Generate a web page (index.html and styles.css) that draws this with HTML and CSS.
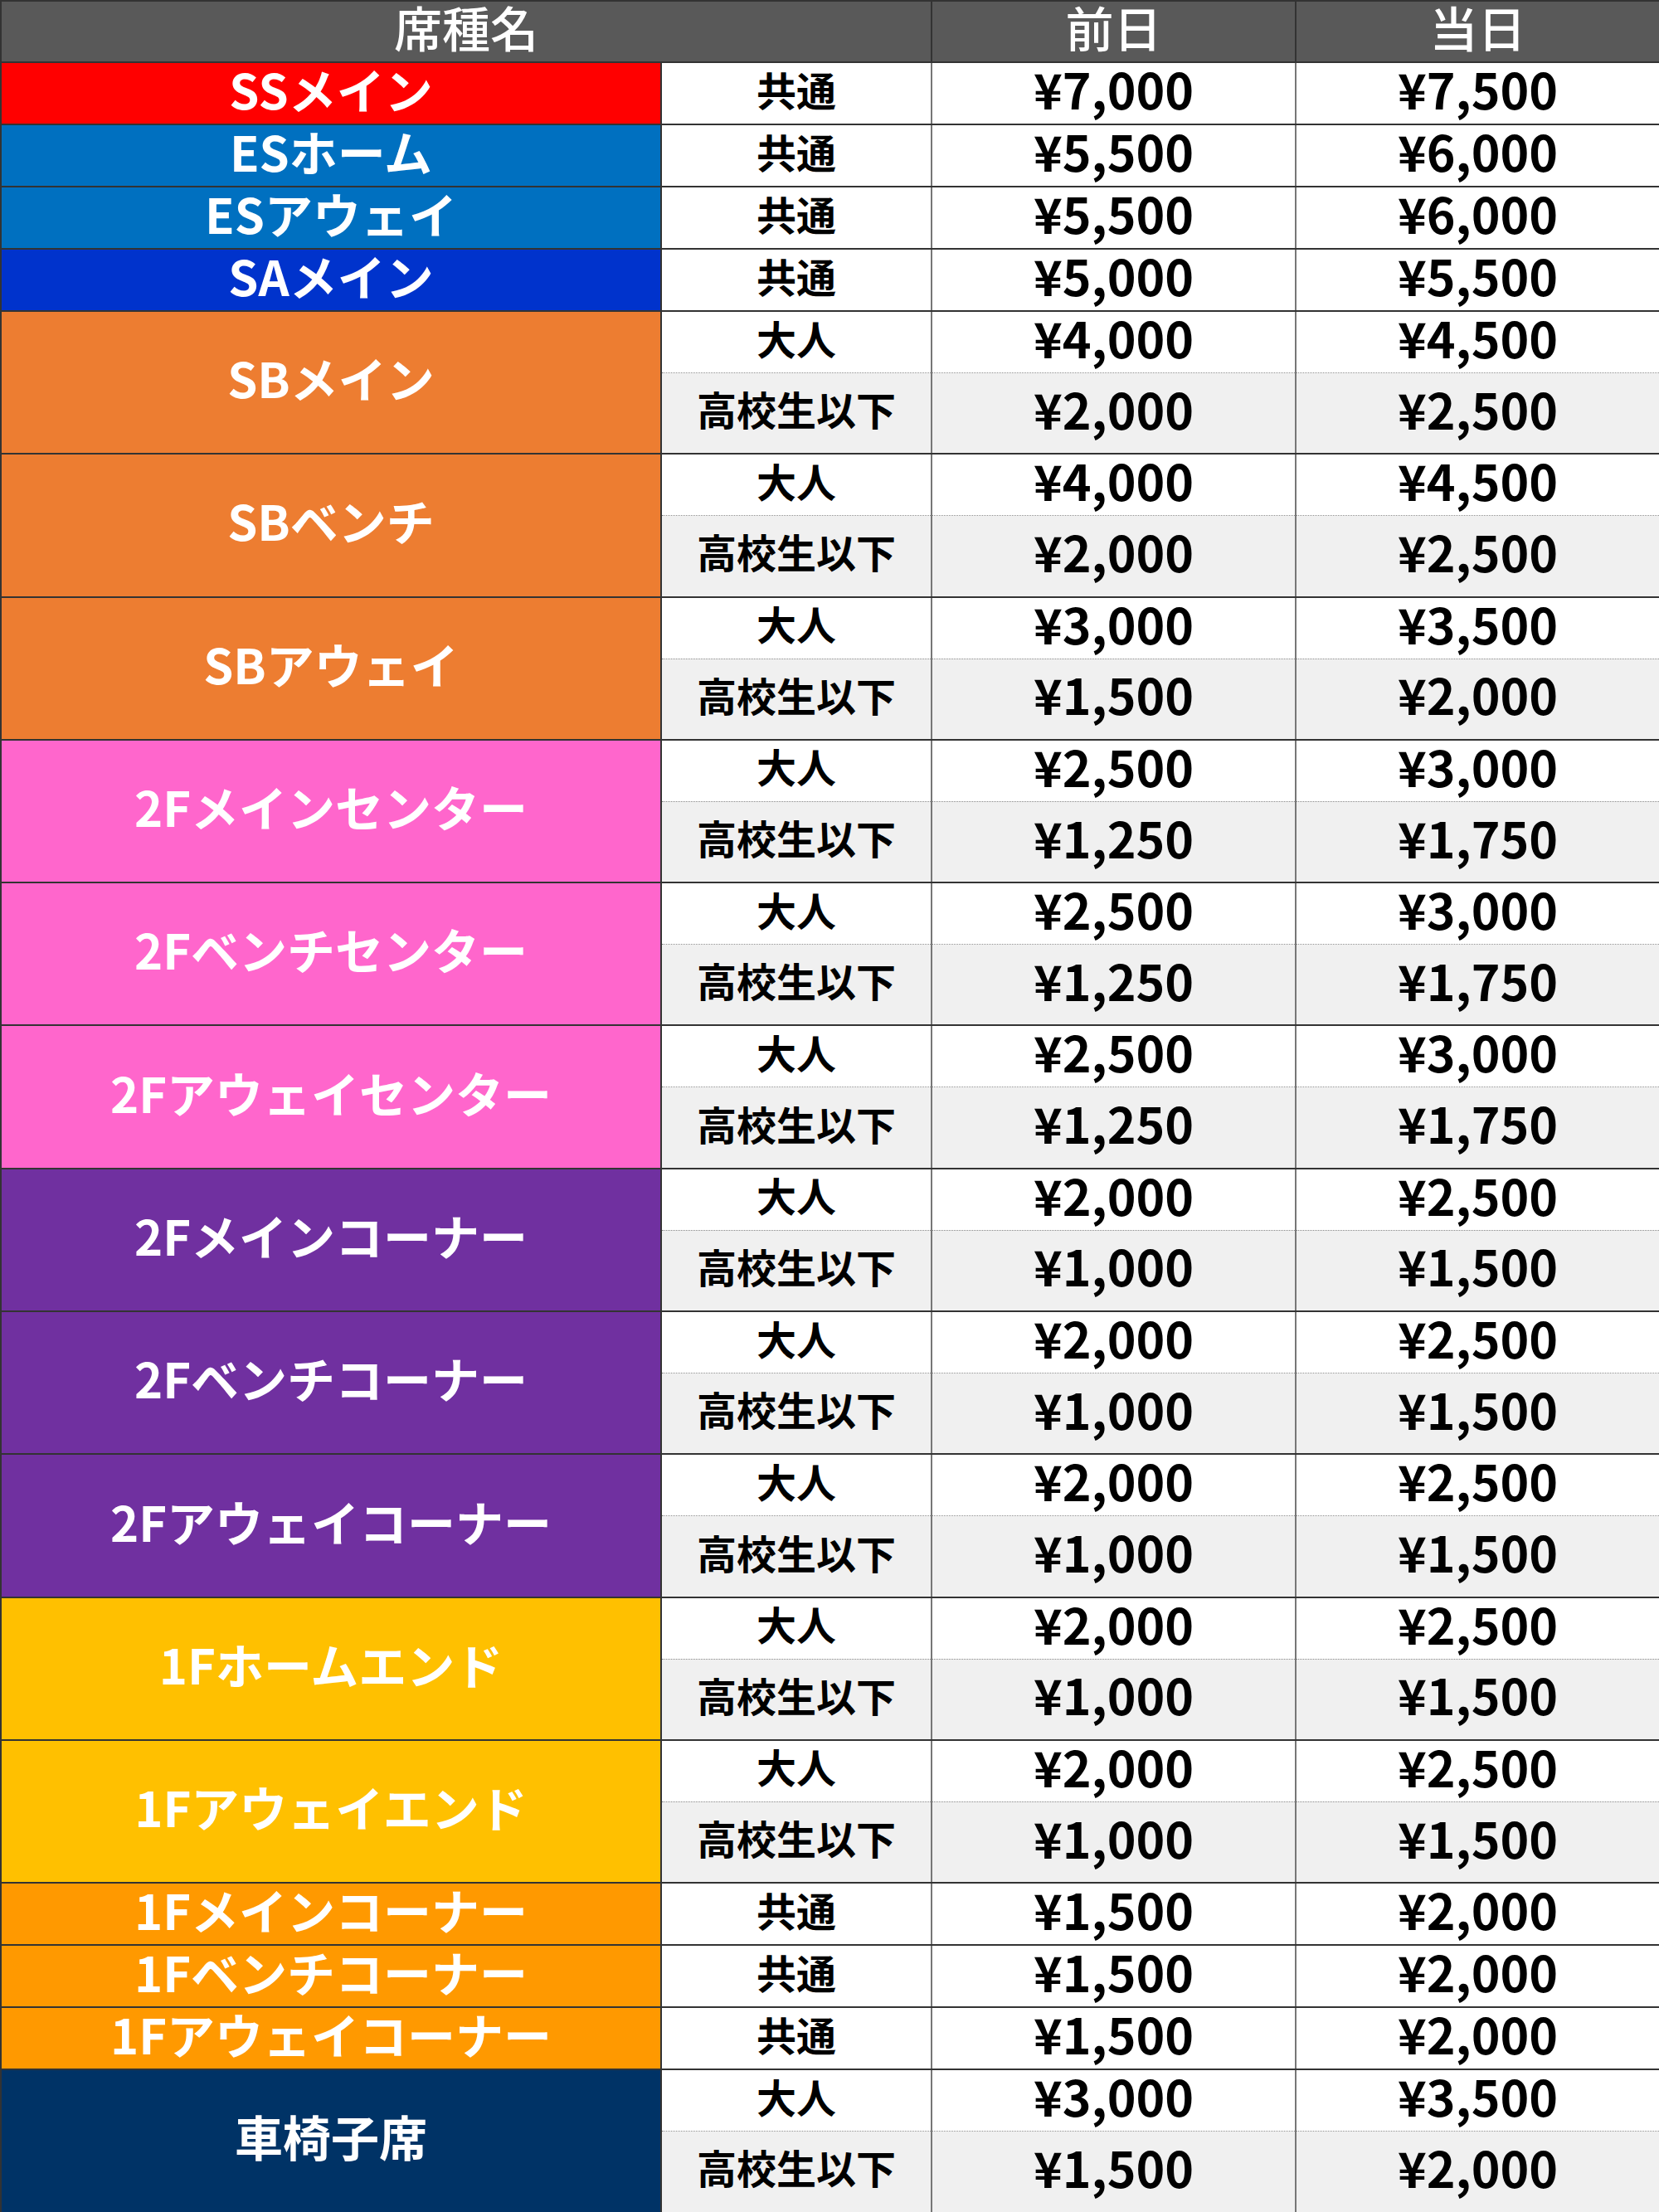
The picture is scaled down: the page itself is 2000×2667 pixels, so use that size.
FILE: index.html
```html
<!DOCTYPE html>
<html lang="ja">
<head>
<meta charset="utf-8">
<title>席種別料金</title>
<link rel="stylesheet" href="styles.css">
</head>
<body>
<table class="price">
  <colgroup>
    <col class="c-name"><col class="c-type"><col class="c-price"><col class="c-price">
  </colgroup>
  <thead>
    <tr class="head"><th colspan="2">席種名</th><th>前日</th><th>当日</th></tr>
  </thead>
  <tbody>
    <tr class="single"><td class="seat ss">SSメイン</td><td class="type">共通</td><td class="amt">¥7,000</td><td class="amt">¥7,500</td></tr>
    <tr class="single"><td class="seat es">ESホーム</td><td class="type">共通</td><td class="amt">¥5,500</td><td class="amt">¥6,000</td></tr>
    <tr class="single"><td class="seat es">ESアウェイ</td><td class="type">共通</td><td class="amt">¥5,500</td><td class="amt">¥6,000</td></tr>
    <tr class="single"><td class="seat sa">SAメイン</td><td class="type">共通</td><td class="amt">¥5,000</td><td class="amt">¥5,500</td></tr>

    <tr class="adult"><td class="seat sb" rowspan="2">SBメイン</td><td class="type">大人</td><td class="amt">¥4,000</td><td class="amt">¥4,500</td></tr>
    <tr class="kid"><td class="type">高校生以下</td><td class="amt">¥2,000</td><td class="amt">¥2,500</td></tr>
    <tr class="adult"><td class="seat sb" rowspan="2">SBベンチ</td><td class="type">大人</td><td class="amt">¥4,000</td><td class="amt">¥4,500</td></tr>
    <tr class="kid"><td class="type">高校生以下</td><td class="amt">¥2,000</td><td class="amt">¥2,500</td></tr>
    <tr class="adult"><td class="seat sb" rowspan="2">SBアウェイ</td><td class="type">大人</td><td class="amt">¥3,000</td><td class="amt">¥3,500</td></tr>
    <tr class="kid"><td class="type">高校生以下</td><td class="amt">¥1,500</td><td class="amt">¥2,000</td></tr>

    <tr class="adult"><td class="seat pk" rowspan="2">2Fメインセンター</td><td class="type">大人</td><td class="amt">¥2,500</td><td class="amt">¥3,000</td></tr>
    <tr class="kid"><td class="type">高校生以下</td><td class="amt">¥1,250</td><td class="amt">¥1,750</td></tr>
    <tr class="adult"><td class="seat pk" rowspan="2">2Fベンチセンター</td><td class="type">大人</td><td class="amt">¥2,500</td><td class="amt">¥3,000</td></tr>
    <tr class="kid"><td class="type">高校生以下</td><td class="amt">¥1,250</td><td class="amt">¥1,750</td></tr>
    <tr class="adult"><td class="seat pk" rowspan="2">2Fアウェイセンター</td><td class="type">大人</td><td class="amt">¥2,500</td><td class="amt">¥3,000</td></tr>
    <tr class="kid"><td class="type">高校生以下</td><td class="amt">¥1,250</td><td class="amt">¥1,750</td></tr>

    <tr class="adult"><td class="seat pu" rowspan="2">2Fメインコーナー</td><td class="type">大人</td><td class="amt">¥2,000</td><td class="amt">¥2,500</td></tr>
    <tr class="kid"><td class="type">高校生以下</td><td class="amt">¥1,000</td><td class="amt">¥1,500</td></tr>
    <tr class="adult"><td class="seat pu" rowspan="2">2Fベンチコーナー</td><td class="type">大人</td><td class="amt">¥2,000</td><td class="amt">¥2,500</td></tr>
    <tr class="kid"><td class="type">高校生以下</td><td class="amt">¥1,000</td><td class="amt">¥1,500</td></tr>
    <tr class="adult"><td class="seat pu" rowspan="2">2Fアウェイコーナー</td><td class="type">大人</td><td class="amt">¥2,000</td><td class="amt">¥2,500</td></tr>
    <tr class="kid"><td class="type">高校生以下</td><td class="amt">¥1,000</td><td class="amt">¥1,500</td></tr>

    <tr class="adult"><td class="seat ye" rowspan="2">1Fホームエンド</td><td class="type">大人</td><td class="amt">¥2,000</td><td class="amt">¥2,500</td></tr>
    <tr class="kid"><td class="type">高校生以下</td><td class="amt">¥1,000</td><td class="amt">¥1,500</td></tr>
    <tr class="adult"><td class="seat ye" rowspan="2">1Fアウェイエンド</td><td class="type">大人</td><td class="amt">¥2,000</td><td class="amt">¥2,500</td></tr>
    <tr class="kid"><td class="type">高校生以下</td><td class="amt">¥1,000</td><td class="amt">¥1,500</td></tr>

    <tr class="single"><td class="seat or">1Fメインコーナー</td><td class="type">共通</td><td class="amt">¥1,500</td><td class="amt">¥2,000</td></tr>
    <tr class="single"><td class="seat or">1Fベンチコーナー</td><td class="type">共通</td><td class="amt">¥1,500</td><td class="amt">¥2,000</td></tr>
    <tr class="single"><td class="seat or">1Fアウェイコーナー</td><td class="type">共通</td><td class="amt">¥1,500</td><td class="amt">¥2,000</td></tr>

    <tr class="adult"><td class="seat nv" rowspan="2">車椅子席</td><td class="type">大人</td><td class="amt">¥3,000</td><td class="amt">¥3,500</td></tr>
    <tr class="kid"><td class="type">高校生以下</td><td class="amt">¥1,500</td><td class="amt">¥2,000</td></tr>
  </tbody>
</table>
</body>
</html>
```
FILE: styles.css
```css
html, body {
  margin: 0;
  padding: 0;
  background: #ffffff;
}

.price {
  width: 2000px;
  border-collapse: collapse;
  table-layout: fixed;
  font-family: "Noto Sans CJK JP", "Noto Sans", sans-serif;
  font-weight: 700;
}

.c-name { width: 796px; }
.c-type { width: 326px; }
.c-price { width: 439px; }

.price th,
.price td {
  padding: 0 0 12px 0;
  text-align: center;
  vertical-align: middle;
  line-height: 1;
  border: 2px solid #333333;
}

.head th {
  height: 60px;
  background: #595959;
  color: #ffffff;
  font-size: 58px;
  font-weight: 500;
}

.single td { height: 61px; }
.adult td { height: 61px; }
.kid td { height: 84.3px; }

.type {
  font-size: 48px;
  color: #000000;
}

.amt {
  font-size: 59px;
  color: #000000;
}

.price td.type,
.price td.amt {
  border-left: 2px solid #777777;
  border-right: 2px solid #777777;
}

.price td.type { border-left-color: #333333; }

.adult td.type,
.adult td.amt {
  border-bottom: 1px dotted #8a8a8a;
}

.kid td {
  background: #f0f0f0;
  border-top: 1px dotted #8a8a8a;
}

.seat {
  color: #ffffff;
  font-size: 58px;
  font-weight: 700;
}

.ss { background: #ff0000; }
.es { background: #0070c0; }
.sa { background: #0033cc; }
.sb { background: #ed7d31; }
.pk { background: #ff66cc; }
.pu { background: #7030a0; }
.ye { background: #ffc000; }
.or { background: #ff9900; }
.nv { background: #003366; }
```
